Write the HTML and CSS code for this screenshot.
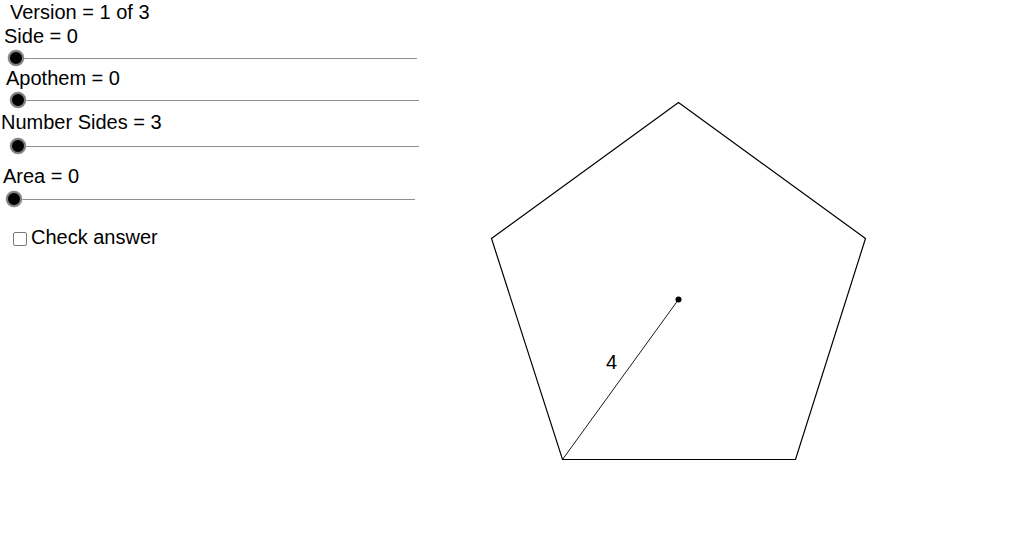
FILE: index.html
```html
<!DOCTYPE html>
<html>
<head>
<meta charset="utf-8">
<link rel="stylesheet" href="styles.css">
</head>
<body>
<div class="stage">
  <svg class="canvas" width="1021" height="549" viewBox="0 0 1021 549">
    <polygon points="678.5,102.5 865.5,238.5 795.5,459.5 562.5,459.5 491.5,238.5" fill="none" stroke="#000" stroke-width="1.2"/>
    <line x1="678.5" y1="299.5" x2="562.5" y2="459.5" stroke="#000" stroke-width="0.9"/>
    <circle cx="678.5" cy="299.5" r="3" fill="#000"/>
    <text x="606" y="369" class="lbl">4</text>
  </svg>
  <div class="controls">
    <div class="label l-version">Version = 1 of 3</div>
    <div class="label l-side">Side = 0</div>
    <div class="slider s-side"><span class="knob"></span></div>
    <div class="label l-apothem">Apothem = 0</div>
    <div class="slider s-apothem"><span class="knob"></span></div>
    <div class="label l-sides">Number Sides = 3</div>
    <div class="slider s-sides"><span class="knob"></span></div>
    <div class="label l-area">Area = 0</div>
    <div class="slider s-area"><span class="knob"></span></div>
    <label class="check"><span class="box"></span>Check answer</label>
  </div>
</div>
</body>
</html>
```
FILE: styles.css
```css
html, body {
  margin: 0;
  padding: 0;
  background: #fff;
}
.stage {
  display: grid;
  width: 1021px;
  height: 549px;
  overflow: hidden;
  font-family: "Liberation Sans", Arial, sans-serif;
  color: #000;
}
.canvas, .controls {
  grid-area: 1 / 1;
}
.canvas {
  display: block;
}
.lbl {
  font-family: "Liberation Sans", Arial, sans-serif;
  font-size: 20px;
  fill: #000;
}
.controls {
  display: flex;
  flex-direction: column;
  align-items: flex-start;
  align-self: start;
  justify-self: start;
}
.label {
  font-size: 20px;
  line-height: 23px;
  white-space: nowrap;
}
.l-version { margin-top: 1px; padding-left: 10px; }
.l-side { margin-top: 1px; padding-left: 4px; }
.l-apothem { margin-top: 1px; padding-left: 6px; }
.l-sides { margin-top: 3px; padding-left: 1px; }
.l-area { margin-top: 11px; padding-left: 3px; }

.slider {
  display: flex;
  align-items: center;
  height: 16px;
  width: 409px;
  background: linear-gradient(#8f8f8f, #8f8f8f) no-repeat 8px center / calc(100% - 8px) 1px;
}
.s-side { margin-top: 2px; margin-left: 8px; }
.s-apothem { margin-top: 2px; margin-left: 10px; }
.s-sides { margin-top: 4px; margin-left: 10px; }
.s-area { margin-top: 3px; margin-left: 6px; }
.knob {
  width: 16px;
  height: 16px;
  box-sizing: border-box;
  border-radius: 50%;
  background: #000;
  border: 2.5px solid #808080;
  box-shadow: 0 0 0 0.5px #c8c8c8;
}
.check {
  display: flex;
  align-items: center;
  margin-top: 19px;
  padding-left: 13px;
  font-size: 20px;
  line-height: 23px;
  white-space: nowrap;
}
.box {
  width: 14px;
  height: 14px;
  box-sizing: border-box;
  border: 1.5px solid #7a7a7a;
  border-radius: 2px;
  margin-right: 4px;
  margin-top: 2px;
}
```
